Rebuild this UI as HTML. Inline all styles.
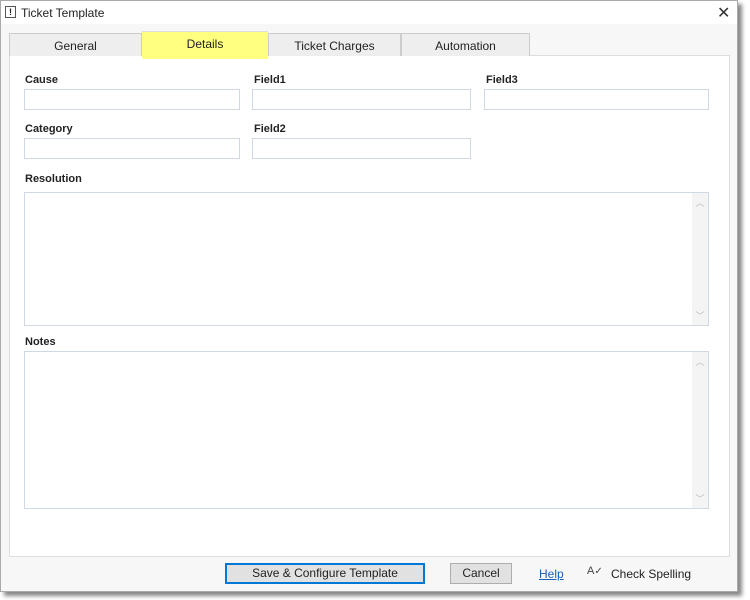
<!DOCTYPE html>
<html><head><style>
*{box-sizing:border-box;margin:0;padding:0}
body{width:750px;height:600px;background:#fff;font-family:"Liberation Sans",sans-serif;font-size:12px;color:#222;position:relative;overflow:hidden}
.win{position:absolute;left:0;top:0;width:738px;height:592px;background:#f7f7f7;border:1px solid #aaa;box-shadow:4px 4px 4px #888}
.title{position:absolute;left:0;top:0;width:736px;height:23px;background:#fff}
.title span{position:absolute;left:20px;top:5px;font-size:12px}
.ico{position:absolute;left:4px;top:5px;width:11px;height:12px;border:1px solid #555;font-size:9px;font-weight:bold;text-align:center;line-height:10px}
.x{position:absolute;left:716px;top:2px;font-size:16px;color:#333}
.tab{position:absolute;top:32px;height:23px;background:#eee;border:1px solid #ccc;border-bottom:none;text-align:center;line-height:24px;font-size:12px}
.panel{position:absolute;left:8px;top:54px;width:721px;height:502px;background:#fff;border:1px solid #ddd}
.lbl{position:absolute;font-weight:bold;font-size:11px}
.in{position:absolute;height:21px;border:1px solid #cfd8e3;background:#fff}
.ta{position:absolute;border:1px solid #cfd8e3;background:#fff}
.sb{position:absolute;right:0;top:0;bottom:0;width:16px;background:#f4f4f4;color:#bbb;font-size:9px;text-align:center}
.btn{position:absolute;top:562px;height:21px;background:#e1e1e1;border:1px solid #adadad;text-align:center;line-height:19px;font-size:12px}
</style></head><body>
<div class="win">
<div class="title"><div class="ico">!</div><span>Ticket Template</span><div class="x">✕</div></div>
<div class="panel">
<div class="lbl" style="left:15px;top:18px">Cause</div>
<div class="in" style="left:14px;top:33px;width:216px"></div>
<div class="lbl" style="left:244px;top:18px">Field1</div>
<div class="in" style="left:242px;top:33px;width:219px"></div>
<div class="lbl" style="left:476px;top:18px">Field3</div>
<div class="in" style="left:474px;top:33px;width:225px"></div>
<div class="lbl" style="left:15px;top:67px">Category</div>
<div class="in" style="left:14px;top:82px;width:216px"></div>
<div class="lbl" style="left:244px;top:67px">Field2</div>
<div class="in" style="left:242px;top:82px;width:219px"></div>
<div class="lbl" style="left:15px;top:117px">Resolution</div>
<div class="ta" style="left:14px;top:136px;width:685px;height:134px"><div class="sb"><div style="position:absolute;top:3px;width:16px">︿</div><div style="position:absolute;bottom:3px;width:16px">﹀</div></div></div>
<div class="lbl" style="left:15px;top:280px">Notes</div>
<div class="ta" style="left:14px;top:295px;width:685px;height:158px"><div class="sb"><div style="position:absolute;top:3px;width:16px">︿</div><div style="position:absolute;bottom:3px;width:16px">﹀</div></div></div>
</div>
<div class="tab" style="left:8px;width:133px">General</div>
<div class="tab" style="left:141px;top:30px;height:28px;width:126px;background:#ffff80;border:none;line-height:24px;border-top:1px solid #ddd">Details</div>
<div class="tab" style="left:267px;width:133px">Ticket Charges</div>
<div class="tab" style="left:400px;width:129px">Automation</div>
<div class="btn" style="left:224px;width:200px;border:2px solid #0078d7;line-height:17px">Save &amp; Configure Template</div>
<div class="btn" style="left:449px;width:62px">Cancel</div>
<div style="position:absolute;left:538px;top:566px;color:#1a5fb4;text-decoration:underline">Help</div>
<div style="position:absolute;left:586px;top:564px;font-size:11px;color:#444">A<span style="font-size:10px">✓</span></div>
<div style="position:absolute;left:610px;top:566px">Check Spelling</div>
</div>
</body></html>
